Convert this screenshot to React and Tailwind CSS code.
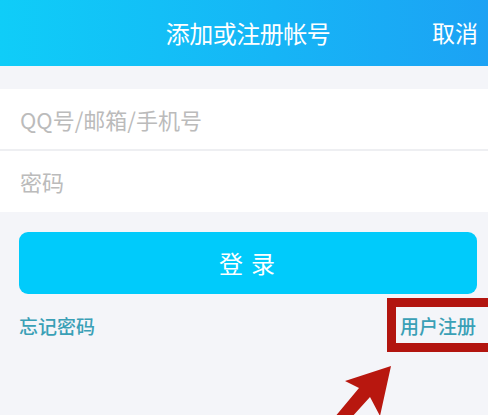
import React from 'react';

function App() {
    return (
        <div
            className="relative w-[488px] h-[415px] overflow-hidden bg-[#f4f5f9]"
            style={{fontFamily: '"Noto Sans CJK SC", "Noto Sans", sans-serif'}}
        >
            {/* header */}
            <div className="relative h-[66px] bg-gradient-to-r from-[#0fcdf8] to-[#1ca2f4] flex items-center justify-center">
                <span className="text-white text-[24px] leading-none tracking-[-0.5px] ml-[8px]">添加或注册帐号</span>
                <span className="absolute right-[10px] top-[21px] text-white text-[23px] leading-none">取消</span>
            </div>

            {/* inputs */}
            <div className="mt-[23px] bg-white">
                <div className="h-[60px] flex items-center pl-[20px] text-[22px] text-[#bbbbbb]">
                    QQ号/邮箱/手机号
                </div>
                <div className="h-[2px] bg-[#eeeff2]"></div>
                <div className="h-[61px] flex items-center pl-[20px] text-[22px] text-[#bbbbbb]">
                    密码
                </div>
            </div>

            {/* login button */}
            <div className="mt-[20px] ml-[19px] mr-[11px] h-[62px] rounded-[9px] bg-[#00cbfb] flex items-center justify-center">
                <span className="text-white text-[24px] tracking-[8px] ml-[6px]">登录</span>
            </div>

            {/* links */}
            <div className="mt-[18px] flex justify-between pl-[19px] pr-[12px] text-[19px] leading-[28px] font-medium text-[#3aa0b6]">
                <span>忘记密码</span>
                <span>用户注册</span>
            </div>

            {/* annotation box */}
            <div className="absolute left-[387px] top-[298px] w-[110px] h-[54px] border-[9px] border-[#b2150f]"></div>

            {/* annotation arrow */}
            <svg className="absolute left-0 top-0" width="488" height="415" viewBox="0 0 488 415">
                <polygon
                    points="391,366 345,381 359,388 334,418 351,418 370,397 380,416"
                    fill="#b8170f"
                />
            </svg>
        </div>
    );
}

export default App;
